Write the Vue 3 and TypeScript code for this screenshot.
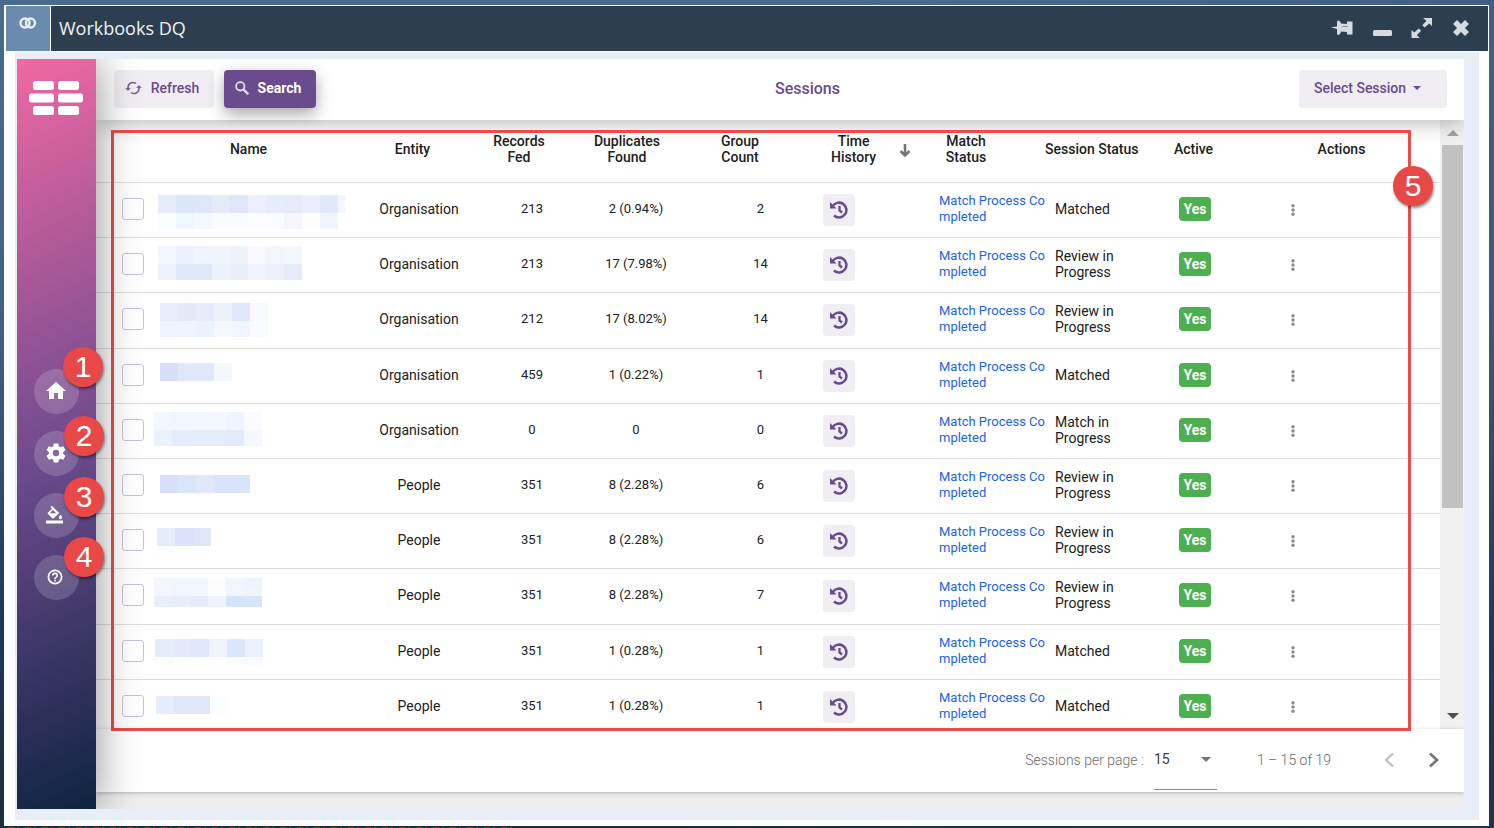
<script setup lang="ts">
import { ref } from 'vue'

interface Mosaic {
  x: number
  y: number
  rows: { h: number; colors: string[] }[]
}

interface Session {
  entity: string
  fed: number
  duplicates: string
  groups: number
  status: string
  mosaic: Mosaic
}

const CELL = 18

const mosaic = (x: number, y: number, first: string, h = 0, second = ''): Mosaic => ({
  x,
  y,
  rows: [
    { h: CELL, colors: first.split(' ') },
    { h, colors: second ? second.split(' ') : [] },
  ],
})

const sessions: Session[] = [
  { entity: 'Organisation', fed: 213, duplicates: '2 (0.94%)', groups: 2, status: 'Matched',
    mosaic: mosaic(6, 12, 'e5edfa dbe7f9 dee7f8 e3ebf7 dee7fa ecf0fc e6edfa e6ebf9 ebeffb e0e9fa', 16, 'fafdff f0f6ff f5f9ff fafbff f9fbff fbfcff f9fbff f5f6fc fdfdff f0f6ff') },
  { entity: 'Organisation', fed: 213, duplicates: '17 (7.98%)', groups: 14, status: 'Review in Progress',
    mosaic: mosaic(6, 8, 'f0f5ff edf1fc f0f4fe eff4fd edf2fb f8f8fe f2f5fe f2f6fd', 16, 'edf2fb e0e9fa e0e9fa eaf2fc e8effb eff3fd eaf1fb e5ecf9') },
  { entity: 'Organisation', fed: 212, duplicates: '17 (8.02%)', groups: 14, status: 'Review in Progress',
    mosaic: mosaic(8, 10, 'e8edfb e4e9f9 e6ecfa eaf2fb e0e9fb f8f9fe', 16, 'eff3fd eff3fc eaf2fb f5f8fe f0f5ff fafbff') },
  { entity: 'Organisation', fed: 459, duplicates: '1 (0.22%)', groups: 1, status: 'Matched',
    mosaic: mosaic(8, 14, 'd6dff8 dde9fa e0e7f9 f4f8fd') },
  { entity: 'Organisation', fed: 0, duplicates: '0', groups: 0, status: 'Match in Progress',
    mosaic: mosaic(2, 8, 'f4f7ff f1f5fe f0f5fe f4f8fc eff4fe fafbff', 16, 'ecf2fc e5ecfb e4ebfb e5ebf9 e3eafa f4f8fd') },
  { entity: 'People', fed: 351, duplicates: '8 (2.28%)', groups: 6, status: 'Review in Progress',
    mosaic: mosaic(8, 16, 'd7e0f9 d9e6f9 e1e7f9 d8e4fb d8e4fa') },
  { entity: 'People', fed: 351, duplicates: '8 (2.28%)', groups: 6, status: 'Review in Progress',
    mosaic: mosaic(5, 14, 'e6edfa dae3fb dee6f8', 8, 'fcfcff') },
  { entity: 'People', fed: 351, duplicates: '8 (2.28%)', groups: 7, status: 'Review in Progress',
    mosaic: mosaic(2, 9, 'f3f6fe f0f5fe f0f5fe fdfdff f0f5fe eef3fd', 11, 'e8effc e6eefa e4ebfa eef3fc d7e3fa d9e4f8') },
  { entity: 'People', fed: 351, duplicates: '1 (0.28%)', groups: 1, status: 'Matched',
    mosaic: mosaic(3, 14, 'e5edfa e3e8fa dde6fa eef3fd dae6f9 e9f1fc', 8, 'fcfcff ffffff ffffff ffffff fafcff fafbff') },
  { entity: 'People', fed: 351, duplicates: '1 (0.28%)', groups: 1, status: 'Matched',
    mosaic: mosaic(4, 16, 'e5ecfa dfe7f9 dfe7f9 fbfefe') },
]

const pageSize = ref(15)
</script>

<template>
  <div class="desktop">
    <div class="window">
      <header class="titlebar">
        <div class="app-icon">
          <svg width="18" height="12" viewBox="0 0 18 12" fill="none" stroke="#e8eef4" stroke-width="2.400">
            <circle cx="6" cy="6" r="4.500" /><circle cx="11.500" cy="6" r="4.500" />
          </svg>
        </div>
        <h1>Workbooks DQ</h1>
        <div class="window-actions">
          <button aria-label="Pin">
            <svg width="22" height="16" viewBox="0 0 22 16" fill="#d5dbe1">
              <path d="M0 7.300 6 6.600V2q0-1.500 1.500-1.500Q9.500.8 10 3.500L16 4V1.500h5.500v13H16V12l-6-.5q-.5 3-2.500 3.500Q6 15 6 13.500V9z" />
              <path d="M11 6.500h6" stroke="#8b98a5" />
            </svg>
          </button>
          <button aria-label="Minimise">
            <svg width="20" height="20" viewBox="0 0 20 20"><rect x="1" y="12" width="19" height="6" rx="1.500" fill="#d5dbe1" /></svg>
          </button>
          <button aria-label="Maximise">
            <svg width="22" height="20" viewBox="0 0 22 20" fill="#d5dbe1">
              <path d="M12 0h9v8l-2.800-2.500-4.600 4-2.300-2.300 4.200-4.500zM.5 20v-8l2.800 2.500 4.400-4 2.400 2.300-4.300 4.500L9 20z" />
            </svg>
          </button>
          <button aria-label="Close">
            <svg width="18" height="18" viewBox="0 0 18 18" stroke="#d5dbe1" stroke-width="5.500"><path d="m3 3 12 12M15 3 3 15" /></svg>
          </button>
        </div>
      </header>

      <div class="frame">
        <div class="app">
          <nav class="sidebar">
            <svg class="logo" width="54" height="34" viewBox="0 0 54 34" fill="#fff">
              <rect x="4" width="21" height="9" rx="2.500" /><rect x="29" width="21" height="9" rx="2.500" />
              <rect y="12.500" width="25" height="9" rx="2.500" /><rect x="29" y="12.500" width="25" height="9" rx="2.500" />
              <rect x="4" y="25" width="21" height="9" rx="2.500" /><rect x="29" y="25" width="21" height="9" rx="2.500" />
            </svg>
            <div class="nav-items">
              <div class="nav-item">
                <button aria-label="Home">
                  <svg width="24" height="24" viewBox="0 0 24 24" fill="#fff"><path d="M10 20v-6h4v6h5v-8h3L12 3 2 12h3v8z" /></svg>
                </button>
                <span class="marker m1">1</span>
              </div>
              <div class="nav-item">
                <button aria-label="Settings">
                  <svg width="24" height="24" viewBox="0 0 24 24" fill="#fff"><path d="M19.140 12.940c.04-.3.060-.61.060-.94s-.02-.64-.07-.94l2.030-1.580a.49.49 0 0 0 .12-.61l-1.920-3.320a.49.49 0 0 0-.59-.22l-2.390.96a7 7 0 0 0-1.620-.94l-.36-2.540A.48.48 0 0 0 13.920 2.400h-3.840a.48.48 0 0 0-.47.410l-.36 2.540a7.400 7.400 0 0 0-1.620.94l-2.390-.96a.48.48 0 0 0-.59.220L2.740 8.870a.48.48 0 0 0 .12.61l2.030 1.580a6 6 0 0 0 0 1.880l-2.030 1.580a.49.49 0 0 0-.12.610l1.920 3.320c.12.220.37.290.59.220l2.390-.96c.5.380 1.030.7 1.620.94l.36 2.540c.05.240.24.410.48.410h3.840c.24 0 .44-.17.47-.41l.36-2.540a7 7 0 0 0 1.620-.94l2.390.96c.22.080.47 0 .59-.22l1.920-3.320a.48.48 0 0 0-.12-.61zM12 15.200a3.200 3.200 0 1 1 0-6.400 3.200 3.200 0 0 1 0 6.400z" /></svg>
                </button>
                <span class="marker m2">2</span>
              </div>
              <div class="nav-item small">
                <button aria-label="Theme">
                  <svg width="20" height="20" viewBox="0 0 20 20" fill="#fff">
                    <path d="M1 15.500h17v3H1z" />
                    <path fill-rule="evenodd" d="m5.500 2 1.300-1.200 7.400 7.200-5.400 5.200q-.8.6-1.600 0L3 9q-.7-.8 0-1.600L7 3.700zM8 5 4.800 8.200h6.400z" />
                    <path d="M15.500 9.500q1.700 2 1.700 3a1.700 1.700 0 0 1-3.400 0q0-1 1.700-3z" />
                  </svg>
                </button>
                <span class="marker m3">3</span>
              </div>
              <div class="nav-item small">
                <button aria-label="Help">
                  <svg width="18" height="18" viewBox="0 0 24 24" fill="#fff"><path d="M11 18h2v-2h-2zm1-16a10 10 0 1 0 0 20 10 10 0 0 0 0-20zm0 17.700a7.700 7.700 0 1 1 0-15.400 7.700 7.700 0 0 1 0 15.400zM12 6a4 4 0 0 0-4 4h2.200a1.800 1.800 0 0 1 3.600 0c0 2-2.900 1.750-2.900 5h2.200c0-2.250 2.900-2.500 2.900-5a4 4 0 0 0-4-4z" /></svg>
                </button>
                <span class="marker m4">4</span>
              </div>
            </div>
          </nav>

          <main>
            <div class="toolbar">
              <div class="tools">
                <button class="btn">
                  <svg width="17" height="14" viewBox="0 0 17 14" fill="none" stroke="#7a5c9c" stroke-width="1.500">
                    <path d="M3 8V6.500A5 5 0 0 1 11 2.500M14 6v1.500a5 5 0 0 1-8 4" />
                    <path d="M0 7.200h6L3 9.800zM11 6.800h6L14 4.200z" fill="#7a5c9c" stroke="none" />
                  </svg>
                  Refresh
                </button>
                <button class="btn primary">
                  <svg width="14" height="14" viewBox="0 0 14 14" fill="none" stroke="#e4dcec" stroke-width="1.800">
                    <circle cx="5.300" cy="5.300" r="4.200" /><path d="m8.500 8.500 4.700 4.700" stroke-width="2.400" />
                  </svg>
                  Search
                </button>
              </div>
              <h2>Sessions</h2>
              <button class="btn select-session">
                Select Session
                <svg width="8" height="4" viewBox="0 0 8 4" fill="#6a4b8d"><path d="M0 0h8L4 4z" /></svg>
              </button>
            </div>

            <div class="table-area">
              <div class="table-clip">
                <table>
                  <colgroup>
                    <col class="w-check" /><col class="w-name" /><col class="w-entity" /><col class="w-fed" />
                    <col class="w-dup" /><col class="w-group" /><col class="w-time" /><col class="w-match" />
                    <col class="w-session" /><col class="w-active" /><col class="w-actions" />
                  </colgroup>
                  <thead>
                    <tr>
                      <th></th>
                      <th>Name</th>
                      <th>Entity</th>
                      <th>Records<br />Fed</th>
                      <th>Duplicates<br />Found</th>
                      <th>Group<br />Count</th>
                      <th>
                        <div class="sort">
                          <span>Time<br />History</span>
                          <svg width="12" height="14" viewBox="0 0 12 14" fill="none" stroke="#757575" stroke-width="2.600"><path d="M6 0v11M1.500 7 6 11.500 10.500 7" /></svg>
                        </div>
                      </th>
                      <th class="h-match">Match<br />Status</th>
                      <th class="h-session">Session Status</th>
                      <th>Active</th>
                      <th class="h-actions">Actions</th>
                    </tr>
                  </thead>
                  <tbody>
                    <tr v-for="(s, i) in sessions" :key="i">
                      <td class="c-check"><input type="checkbox" :aria-label="`Select row ${i + 1}`" /></td>
                      <td class="c-name">
                        <svg width="193" height="54" viewBox="0 0 193 54" shape-rendering="crispEdges">
                          <g v-for="(row, r) in s.mosaic.rows" :key="r">
                            <rect
                              v-for="(c, k) in row.colors" :key="k"
                              :x="s.mosaic.x + k * CELL" :y="s.mosaic.y + r * CELL"
                              :width="CELL" :height="row.h" :fill="`#${c}`"
                            />
                          </g>
                          <rect v-if="i === 0" x="186" y="12" width="7" height="18" fill="#f3f6ff" />
                        </svg>
                      </td>
                      <td class="c-entity">{{ s.entity }}</td>
                      <td class="c-fed">{{ s.fed }}</td>
                      <td class="c-dup">{{ s.duplicates }}</td>
                      <td class="c-group">{{ s.groups }}</td>
                      <td class="c-time">
                        <button class="history" aria-label="Time history">
                          <svg width="20" height="18" viewBox="0 0 20 18" fill="none" stroke="#6a4b8d" stroke-width="2.500">
                            <path d="M3.500 5.500A7.400 7.400 0 1 1 5 14.500" />
                            <path d="M10.500 5v4.500l2.500 2" stroke-width="2.300" />
                            <path d="M1 1v6.500h6.500z" fill="#6a4b8d" stroke="none" />
                          </svg>
                        </button>
                      </td>
                      <td class="c-match"><a href="#">Match Process Co<br />mpleted</a></td>
                      <td class="c-session">{{ s.status }}</td>
                      <td class="c-active"><span class="yes">Yes</span></td>
                      <td class="c-actions">
                        <button class="more" aria-label="More actions">
                          <svg width="4" height="12" viewBox="0 0 4 12" fill="#8c8c8c"><circle cx="2" cy="1.700" r="1.700" /><circle cx="2" cy="6" r="1.700" /><circle cx="2" cy="10.300" r="1.700" /></svg>
                        </button>
                      </td>
                    </tr>
                  </tbody>
                </table>
              </div>
              <div class="scrollbar">
                <svg width="12" height="6" viewBox="0 0 12 6" fill="#a3a3a3"><path d="M0 6h12L6 0z" /></svg>
                <div class="thumb"></div>
                <svg width="12" height="6" viewBox="0 0 12 6" fill="#505050"><path d="M0 0h12L6 6z" /></svg>
              </div>
            </div>

            <footer>
              <label for="page-size">Sessions per page :</label>
              <div class="page-size">
                <select id="page-size" v-model="pageSize">
                  <option :value="15">15</option>
                  <option :value="30">30</option>
                </select>
                <svg width="10" height="5" viewBox="0 0 10 5" fill="#757575"><path d="M0 0h10L5 5z" /></svg>
              </div>
              <span class="range">1 – 15 of 19</span>
              <button class="pager" aria-label="Previous page" disabled>
                <svg width="10" height="16" viewBox="0 0 10 16" fill="none" stroke="#bdbdbd" stroke-width="2.200"><path d="M9 1.500 2 8l7 6.500" /></svg>
              </button>
              <button class="pager" aria-label="Next page">
                <svg width="10" height="16" viewBox="0 0 10 16" fill="none" stroke="#757575" stroke-width="2.600"><path d="m1 1.500 7 6.500-7 6.500" /></svg>
              </button>
            </footer>
            <div class="highlight"><span class="marker m5">5</span></div>
          </main>
        </div>
      </div>
    </div>
  </div>
</template>

<style>
body {
  margin: 0;
}
</style>

<style scoped>
* {
  box-sizing: border-box;
}
button {
  border: 0;
  padding: 0;
  background: none;
  font: inherit;
  color: inherit;
  display: flex;
  align-items: center;
  justify-content: center;
}
svg {
  display: block;
  flex: none;
}
.desktop {
  position: relative;
  min-height: 100vh;
  display: flex;
  padding: 5px 5px 2px 4px;
  background: linear-gradient(100deg, transparent 50%, rgba(40, 60, 110, 0.3)), linear-gradient(#4a6b8e, #45607f 40%, #1c3a54 75%, #1c2d40);
  font: 14px/16px Roboto, "Open Sans", sans-serif;
  color: #212121;
}
.desktop::after {
  content: "";
  position: absolute;
  left: 8px;
  bottom: 0;
  width: 34%;
  height: 1px;
  background: repeating-linear-gradient(90deg, #c8101c 0 6px, transparent 6px 9px, #c8101c 9px 11px, transparent 11px 17px);
}
.window {
  flex: 1;
  min-width: 0;
  display: flex;
  flex-direction: column;
  background: #fff;
}
.titlebar {
  display: flex;
  height: 47px;
  padding: 1px 1px 1px 2px;
  gap: 1px;
}
.app-icon {
  width: 44px;
  padding: 11px 0 0 13px;
  background: #6a8bad;
}
h1 {
  flex: 1;
  margin: 0;
  padding-left: 8px;
  background: #2d3e50;
  color: #f0f2f4;
  font: 18px/44px "Open Sans", sans-serif;
}
.window-actions {
  display: flex;
  align-items: center;
  gap: 19px;
  margin-left: -1px;
  padding: 0 18px 2px 0;
  background: #2d3e50;
}
.frame {
  flex: 1;
  display: flex;
  margin: 0 10px 6px 11px;
  padding: 7px 15px 11px 2px;
  background: #e7eef6;
}
.app {
  flex: 1;
  min-width: 0;
  display: flex;
  overflow: hidden;
  background: #ededed;
}
.sidebar {
  position: relative;
  z-index: 2;
  width: 79px;
  flex: none;
  padding: 22px 0 0 12px;
  background: linear-gradient(155deg, #f068a2, #6c4a8e 53%, #0e2440);
  box-shadow: 0 0 44px rgba(0, 0, 0, 0.45);
}
.nav-items {
  display: flex;
  flex-direction: column;
  gap: 17px;
  margin-top: 254px;
  padding-left: 5px;
}
.nav-item {
  position: relative;
  width: 45px;
}
.nav-item button {
  width: 45px;
  height: 45px;
  padding: 0 1px 1px 0;
  border-radius: 50%;
  background: rgba(255, 255, 255, 0.17);
}
.nav-item.small button {
  padding-right: 4px;
}
.marker {
  position: absolute;
  width: 40px;
  height: 40px;
  border-radius: 50%;
  background: #e94848;
  box-shadow: 1px 2px 3px rgba(0, 0, 0, 0.45);
  color: #fff;
  font: 30px/40px "Liberation Sans", Arial, sans-serif;
  text-align: center;
}
.m1 { left: 29px; top: -22px; }
.m2 { left: 30px; top: -15px; }
.m3 { left: 30px; top: -16px; }
.m4 { left: 30px; top: -18px; }
.m5 { right: -25px; top: 33px; }
main {
  position: relative;
  flex: 1;
  min-width: 0;
  display: flex;
  flex-direction: column;
  padding-bottom: 17px;
}
.toolbar {
  position: relative;
  z-index: 1;
  display: flex;
  align-items: center;
  justify-content: space-between;
  height: 61px;
  padding: 0 17px 2px 18px;
  background: #fff;
  box-shadow: 0 2px 22px rgba(0, 0, 0, 0.3);
}
.tools {
  display: flex;
  gap: 10px;
}
.btn {
  height: 38px;
  width: 100px;
  padding: 0 4px 2px 0;
  gap: 9px;
  border-radius: 4px;
  background: #f0edf3;
  color: #6a4b8d;
  font-weight: 500;
}
.btn.primary {
  width: 92px;
  background: #6a4b8d;
  color: #fff;
  font-weight: 700;
  box-shadow: 0 6px 16px rgba(0, 0, 0, 0.35);
}
.btn.select-session {
  width: 148px;
  padding-right: 11px;
  gap: 7px;
}
h2 {
  margin: 0;
  color: #6a4b8d;
  font-size: 16px;
  font-weight: 500;
}
.table-area {
  display: flex;
  height: 609px;
  background: #fff;
}
.table-clip {
  flex: 1;
  min-width: 0;
  overflow: hidden;
}
table {
  width: 100%;
  height: 615px;
  table-layout: fixed;
  border-collapse: separate;
  border-spacing: 0;
}
.w-check { width: 56px; }
.w-name { width: 193px; }
.w-entity { width: 135px; }
.w-fed { width: 78px; }
.w-dup { width: 138px; }
.w-group { width: 88px; }
.w-time { width: 155px; }
.w-match { width: 106px; }
.w-session { width: 103px; }
.w-active { width: 91px; }
.w-actions { width: 201px; }
th,
td {
  padding: 0 0 2px;
  border-bottom: 1px solid #dedede;
  text-align: center;
  vertical-align: middle;
}
th {
  height: 63px;
  padding-bottom: 4px;
  font-weight: 500;
}
td {
  height: 55px;
}
.sort {
  display: flex;
  align-items: center;
  gap: 23px;
  padding-left: 47px;
}
.sort svg {
  margin-top: 4px;
}
.h-match {
  padding-right: 52px;
}
.h-session {
  text-align: left;
  white-space: nowrap;
}
.h-actions {
  padding-left: 4px;
}
.c-check {
  padding-left: 26px;
}
.c-check input {
  display: block;
  appearance: none;
  width: 22px;
  height: 22px;
  margin: 0;
  border: 1px solid #cbc2d8;
  border-radius: 3px;
  background: #fff;
}
.c-name {
  padding: 0;
}
.c-entity { padding-left: 13px; }
.c-fed { padding-left: 26px; }
.c-dup { padding-left: 18px; }
.c-group { padding-left: 41px; }
.c-fed,
.c-dup,
.c-group,
.c-match {
  font-size: 13px;
}
.c-time {
  padding: 0 0 0 39px;
}
.history {
  width: 32px;
  height: 32px;
  border-radius: 4px;
  background: #f0edf3;
}
.c-match,
.c-session {
  text-align: left;
}
.c-match a {
  color: #1a63e8;
  text-decoration: none;
  white-space: nowrap;
}
.c-session {
  padding-left: 10px;
  padding-right: 12px;
}
.c-active {
  padding-left: 3px;
}
.yes {
  display: inline-block;
  width: 32px;
  border-radius: 4px;
  background: #4caf50;
  color: #fff;
  font-weight: 700;
  line-height: 24px;
}
.c-actions {
  padding: 0 0 0 48px;
}
.more {
  width: 12px;
  height: 24px;
}
.scrollbar {
  display: flex;
  flex-direction: column;
  align-items: center;
  justify-content: space-between;
  width: 24px;
  padding: 10px 1px 10px 2px;
  background: #f1f1f1;
}
.thumb {
  width: 100%;
  height: 363px;
  margin: 9px 0 auto;
  background: #c1c1c1;
}
footer {
  display: flex;
  align-items: center;
  justify-content: flex-end;
  height: 63px;
  padding: 0 25px 2px 0;
  background: #fff;
  color: #6c6c6c;
  font-weight: 300;
  box-shadow: 0 1px 4px rgba(0, 0, 0, 0.25);
}
.page-size {
  position: relative;
  align-self: flex-end;
  width: 63px;
  height: 60px;
  margin: 0 40px 0 10px;
  border-bottom: 1px solid #8c8c8c;
}
.page-size select {
  appearance: none;
  width: 100%;
  height: 58px;
  padding: 0;
  border: 0;
  background: none;
  font: 14px/18px Roboto, sans-serif;
  color: #3c3c3c;
}
.page-size svg {
  position: absolute;
  right: 6px;
  top: 27px;
  pointer-events: none;
}
.range {
  margin-right: 53px;
}
.pager + .pager {
  margin-left: 35px;
}
.highlight {
  position: absolute;
  z-index: 1;
  inset: 71px 53px 78px 15px;
  border: 3px solid #ec4c48;
  pointer-events: none;
}
</style>
